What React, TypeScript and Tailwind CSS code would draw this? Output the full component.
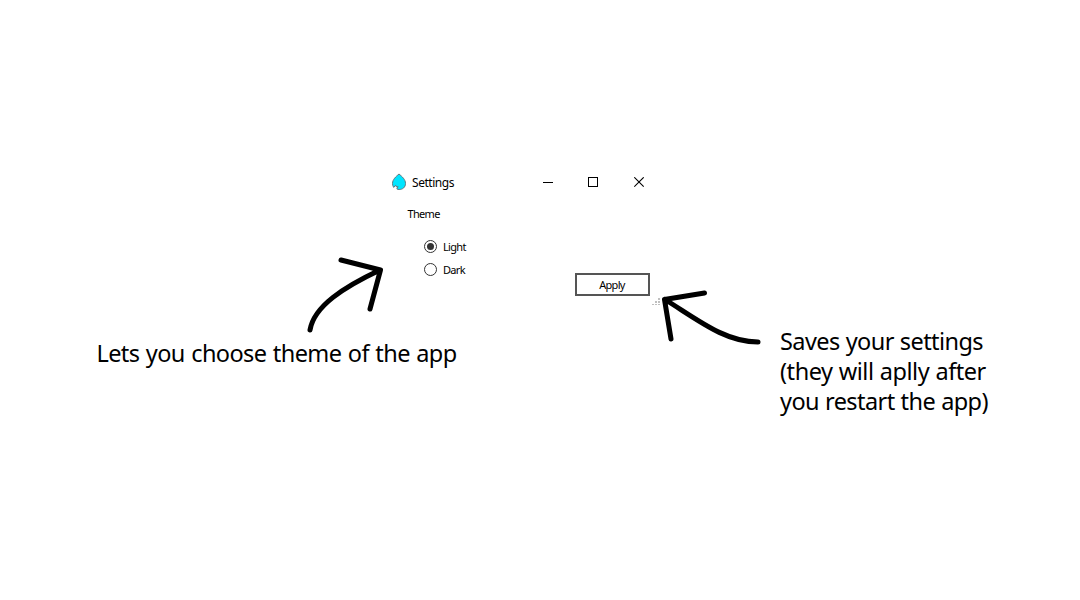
import { useState } from "react";

function DropIcon() {
  return (
    <svg className="h-[18px] w-[16px] shrink-0" viewBox="0 0 16 18">
      <path
        d="M8 1C5 3.500 1.500 6.500 1.500 10.500c0 1.500.4 2.800 1.200 3.900l2-2.200.6 1.700 1.800-.3-1.300 2.300c.7.400 1.500.6 2.400.6 3.400 0 6.300-2.200 6.300-6C14.500 6.500 11 3.500 8 1Z"
        fill="#00e5ff"
        stroke="#5f7880"
        strokeWidth="1"
      />
    </svg>
  );
}

function TitleBar() {
  return (
    <header className="flex h-[30px] items-center">
      <div className="flex w-[142px] items-center pl-[7px]">
        <DropIcon />
        <span className="mt-[2px] ml-[5px] text-[12px] leading-[16px] tracking-[-0.450px]">Settings</span>
      </div>
      <button aria-label="Minimize" className="flex h-[30px] w-[45px] items-center justify-center">
        <svg className="size-[11px]" viewBox="0 0 11 11" shapeRendering="crispEdges">
          <path d="M0 5.5h10" stroke="#000" />
        </svg>
      </button>
      <button aria-label="Maximize" className="flex h-[30px] w-[45px] items-center justify-center">
        <svg className="size-[11px]" viewBox="0 0 11 11" shapeRendering="crispEdges">
          <path d="M.5.500h9v9h-9z" fill="none" stroke="#000" />
        </svg>
      </button>
      <button aria-label="Close" className="flex h-[30px] w-[45px] items-center justify-center">
        <svg className="ml-px size-[11px]" viewBox="0 0 11 11">
          <path d="m.3.300 9.400 9.400m0-9.400-9.400 9.400" stroke="#000" strokeWidth="1.100" />
        </svg>
      </button>
    </header>
  );
}

function Radio({ label, checked, onSelect }: { label: string; checked: boolean; onSelect: () => void }) {
  return (
    <button role="radio" aria-checked={checked} onClick={onSelect} className="flex h-[23px] items-center gap-[6px]">
      <svg className="size-[13px]" viewBox="0 0 13 13">
        <circle cx="6.5" cy="6.5" r="6" fill="#fff" stroke="#333" />
        {checked && <circle cx="6.5" cy="6.5" r="3.500" fill="#333" />}
      </svg>
      <span>{label}</span>
    </button>
  );
}

function ResizeGrip() {
  return (
    <svg className="h-[8px] w-[8px]" viewBox="0 0 8 8" fill="#bfbfbf" shapeRendering="crispEdges">
      <path d="M6 0h2v2H6zM3 3h2v2H3zM6 3h2v2H6zM0 6h2v1H0zM3 6h2v1H3zM6 6h2v1H6z" />
    </svg>
  );
}

function SettingsWindow() {
  const [theme, setTheme] = useState("Light");
  return (
    <section className="flex h-[140px] w-[278px] flex-col">
      <TitleBar />
      <div className="flex grow flex-col text-[11px] leading-[14px] tracking-[-0.680px]">
        <h2 className="mt-[10px] pl-[23.500px]">Theme</h2>
        <div className="flex grow justify-between">
          <div role="radiogroup" className="flex flex-col pt-[14px] pl-[40px]">
            {["Light", "Dark"].map((name) => (
              <Radio key={name} label={name} checked={theme === name} onSelect={() => setTheme(name)} />
            ))}
          </div>
          <div className="flex w-[87px] flex-col pt-[52px]">
            <button className="h-[23px] w-[75px] border-2 border-[#555] pr-px leading-[19px]">Apply</button>
            <div className="mt-[2px] flex justify-end pr-[2px]">
              <ResizeGrip />
            </div>
          </div>
        </div>
      </div>
    </section>
  );
}

function Arrows() {
  return (
    <svg
      className="pointer-events-none absolute inset-0 h-[600px] w-[1080px]"
      viewBox="0 0 1080 600"
      fill="none"
      stroke="#000"
      strokeWidth="5"
      strokeLinecap="round"
      strokeLinejoin="round"
    >
      <path d="M310 330C314 306 344 287 380 270M341 260l39.500 10-10.500 39" />
      <path d="M758 342C725 342 698 320 665 299.500M704.500 293l-40 6.500 6.500 39.500" />
    </svg>
  );
}

export default function App() {
  return (
    <main className="relative flex h-[600px] w-[1080px] items-start overflow-hidden bg-white pt-[167px] font-['Noto_Sans',sans-serif] text-black">
      <p className="mt-[171px] -mr-[73px] w-[457px] shrink-0 pl-[96.500px] text-[23.500px] leading-[30px] tracking-[-0.610px] whitespace-nowrap [word-spacing:1px]">
        Lets you choose theme of the app
      </p>
      <SettingsWindow />
      <div className="mt-[159px] ml-[118px] text-[23.500px] leading-[30px] tracking-[-0.580px] whitespace-nowrap [word-spacing:0.500px]">
        <p>Saves your settings</p>
        <p className="tracking-[-0.450px]">(they will aplly after</p>
        <p>you restart the app)</p>
      </div>
      <Arrows />
    </main>
  );
}
